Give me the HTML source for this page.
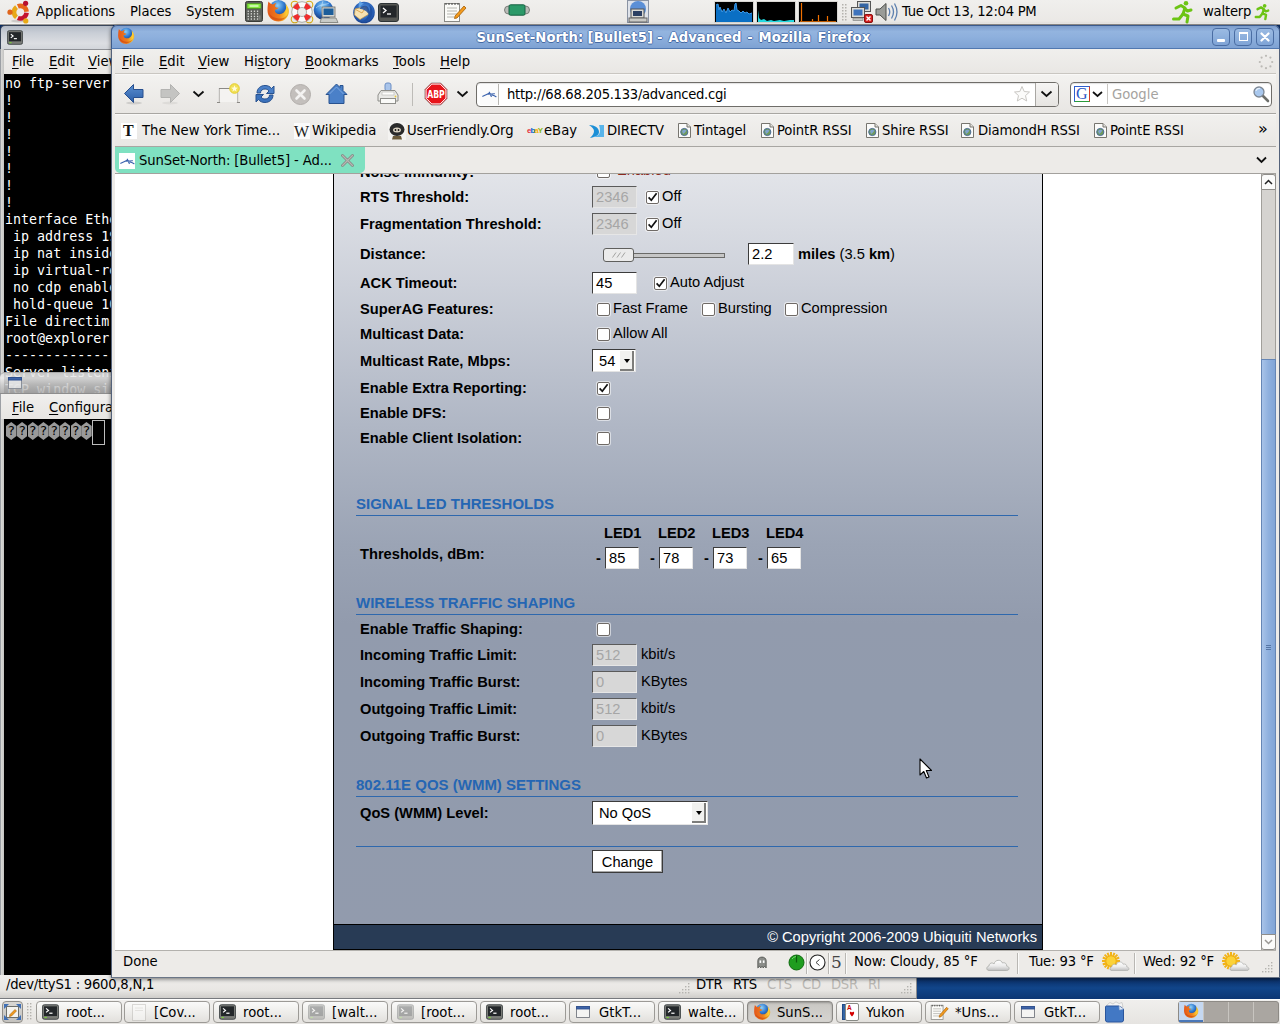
<!DOCTYPE html>
<html lang="en">
<head>
<meta charset="utf-8">
<title>SunSet-North: [Bullet5] - Advanced - Mozilla Firefox</title>
<style>
*{box-sizing:border-box;margin:0;padding:0}
html,body{width:1280px;height:1024px;overflow:hidden;background:linear-gradient(#0a2c63 0,#0a2c63 978px,#11458a 988px,#0c3674 999px)}
body{position:relative;font-family:"DejaVu Sans","Liberation Sans",sans-serif;font-size:13.33px;color:#000}
.abs{position:absolute}
.ui{font-family:"DejaVu Sans","Liberation Sans",sans-serif;font-size:13.2px;white-space:pre;line-height:16px}
.mono{font-family:"DejaVu Sans Mono","Liberation Mono",monospace;font-size:13.33px;white-space:pre;line-height:17px;color:#fff}
u{text-decoration:underline;text-underline-offset:2px}
/* ---------- panels ---------- */
#toppanel{left:0;top:0;width:1280px;height:25px;background:linear-gradient(#f0efed,#eae8e5);border-bottom:1px solid #9d9b98;box-shadow:inset 0 -1px 0 #f6f5f4}
#botpanel{left:0;top:999px;width:1280px;height:25px;background:linear-gradient(#f0efed,#e6e4e1);border-top:1px solid #fff}
/* ---------- terminal 1 ---------- */
#term1{left:0;top:25px;width:113px;height:352px}
#term1 .title{left:0;top:0;width:113px;height:24px;background:linear-gradient(#b4bbc6 0,#c9ced6 30%,#dcdee2 75%,#d3d6db 100%);border-top:1px solid #39455a;border-left:1px solid #39455a;border-radius:5px 0 0 0}
#term1 .menu{left:1px;top:24px;width:112px;height:25px;background:linear-gradient(#f0efed,#e9e7e4);border-top:1px solid #8f9196}
#term1 .blk{left:4px;top:49px;width:108px;height:330px;background:#000}
.lframe{left:0;width:4px;background:linear-gradient(90deg,#5f6672 0,#d9d9d7 1px,#c4c4c2 100%)}
/* ---------- gtkterm ---------- */
#term2{left:0;top:372px;width:917px;height:627px}
#term2 .title{left:0;top:0;width:113px;height:22px;background:linear-gradient(rgba(222,222,222,.9) 0,rgba(238,238,238,.88) 25%,rgba(205,205,205,.88) 60%,rgba(176,176,176,.9) 100%);border-top:1px solid #a9a9a9;border-bottom:1px solid #8d8d8d;border-radius:5px 0 0 0}
#term2 .menu{left:1px;top:22px;width:112px;height:25px;background:linear-gradient(#f0efed,#e7e5e2)}
#term2 .blk{left:4px;top:47px;width:108px;height:556px;background:#000}
#term2 .status{left:0;top:603px;width:917px;height:24px;background:linear-gradient(#efeeec 0,#e9e7e4 65%,#cfcdca 100%);border-bottom:1px solid #77797e;border-right:1px solid #8a8c90}
.tl{left:5px}
.qm{width:10.5px;height:18px;background:#9a9a9a;clip-path:polygon(50% 0,100% 22%,100% 78%,50% 100%,0 78%,0 22%);color:#000;font-family:"DejaVu Sans Mono",monospace;font-size:13px;line-height:18px;text-align:center}
.tb{top:1001px;width:86px;height:22px;margin-left:-.5px;border:1px solid #9c9a96;border-radius:4px;background:linear-gradient(#fafaf9,#ecebe8 60%,#e2e0dc)}
.tb.act{background:linear-gradient(#c9c7c3,#d6d4d0);border-color:#8a8884;box-shadow:inset 0 1px 2px rgba(0,0,0,.25)}
.tbt{top:1005px}
/* ---------- firefox ---------- */
#ff{left:0;top:0;width:1280px;height:1024px}
#ff .frame{left:111px;top:25px;width:1169px;height:953px;box-shadow:0 1px 4px rgba(0,0,0,.55);background:#edebe8;border-left:1px solid #54627a;border-right:1px solid #54627a;border-bottom:1px solid #6b7687;border-radius:6px 6px 0 0}
#ff .title{left:111px;top:25px;width:1169px;height:24px;background:linear-gradient(#7c9ccb 0,#93b4df 25%,#8eb0dd 50%,#7ea2d3 100%);border:1px solid #3b5a8c;border-bottom-color:#5178b0;border-radius:6px 6px 0 0}
#ff .ttext{top:30px;font-weight:bold;color:#fff;text-shadow:0 1px 0 #456aa3,0 -1px 0 #5f83bb,1px 0 0 #5478b0,-1px 0 0 #5478b0;letter-spacing:.05px}
.wbtn{top:28px;width:18px;height:18px;border:1px solid #4a6da3;border-radius:4px;background:linear-gradient(#9bbbe3,#7fa4d6)}
#ff .menubar{left:115px;top:49px;width:1161px;height:25px;background:linear-gradient(#f0efed,#e9e7e4);border-bottom:1px solid #c9c6c1}
#ff .navbar{left:115px;top:74px;width:1161px;height:40px;background:linear-gradient(#f3f2f0,#e8e6e3);border-top:1px solid #f9f8f7;border-bottom:1px solid #a8a6a2}
#ff .bmbar{left:115px;top:114px;width:1161px;height:33px;background:linear-gradient(#f1f0ee,#e9e7e4);border-top:1px solid #f9f8f7;border-bottom:1px solid #a8a6a2}
#ff .tabbar{left:115px;top:147px;width:1161px;height:27px;background:#edebe8;border-bottom:1px solid #a3a19d}
#ff .tab{left:115px;top:147px;width:250px;height:26px;background:#7fe1c1;border-radius:0 0 5px 5px}
#ff .content{left:115px;top:174px;width:1146px;height:776px;background:#fff}
#ff .statusbar{left:115px;top:950px;width:1161px;height:27px;background:#edebe8;border-top:1px solid #b3b1ad}
.m{top:54px}
.bm{top:123px}
.fav{width:16px;height:16px}
.entry{background:#fff;border:1px solid #6f6d69;border-radius:4px;box-shadow:inset 0 1px 1px rgba(0,0,0,.12)}
/*PAGECSS*/
/* ---------- web page ---------- */
#page{left:333px;top:174px;width:710px;height:776px;border-left:1px solid #000;border-right:1px solid #000;background:linear-gradient(#e2e4e9 0,#cdd1da 110px,#b0b7c5 250px,#9ba4b5 370px,#929bad 450px,#919bad 520px,#929bad 100%);overflow:hidden}
#page,.pg{font-family:"Liberation Sans",sans-serif;font-size:14.67px;line-height:17px;white-space:pre;color:#000}
.lb{left:26px;font-weight:bold}
.hd{left:22px;font-weight:bold;color:#2566b3;font-size:15px}
.hr{left:22px;width:662px;height:1px;background:#2e68ad}
.inp{height:22px;background:#fff;border:1px solid;border-color:#3c3c3c #e4e4e4 #e4e4e4 #3c3c3c;padding:2px 0 0 3px;font-size:14.67px;line-height:17px}
.inp.dis{background:#d7d7d7;color:#a6a6a6;border-color:#5a5a5a #e6e6e6 #e6e6e6 #5a5a5a}
.cb{width:12.500px;height:12.500px;background:#fff;border:1px solid #6f6a66;border-radius:2px;box-shadow:0 0 0 1px rgba(255,255,255,.55)}
.ddb{width:14px;height:20px;background:#f1f1ef;border:solid;border-width:0 2px 2px 0;border-color:#7d7d7b}
.ddb::after{content:"";position:absolute;left:4px;top:8px;border:3px solid transparent;border-top:4px solid #000;border-bottom:0}
#footer{left:0;top:750px;width:708px;height:26px;background:#283b55;border-top:1px solid #000;border-bottom:1px solid #000;color:#fff;font-size:14.67px;line-height:25px;text-align:right;padding-right:5px}
.btn{background:#fff;border:1px solid #3a3a3a;box-shadow:inset -1px -1px 0 #a9a9a9;font-size:14.67px;line-height:22px;text-align:center}
/*ENDPAGECSS*/
</style>
</head>
<body>
<svg width="0" height="0" style="position:absolute"><defs>
<radialGradient id="gGlobe" cx=".45" cy=".3" r=".75"><stop offset="0" stop-color="#8fd0f6"/><stop offset=".5" stop-color="#2f78cf"/><stop offset="1" stop-color="#112c6e"/></radialGradient>
<linearGradient id="gFox" x1="0" y1="0" x2="1" y2="0"><stop offset="0" stop-color="#e4581a"/><stop offset=".55" stop-color="#ef7f1c"/><stop offset=".9" stop-color="#fbcf35"/><stop offset="1" stop-color="#f8b22a"/></linearGradient>
<radialGradient id="gBird" cx=".5" cy=".4" r=".7"><stop offset="0" stop-color="#5e9fe6"/><stop offset=".6" stop-color="#2a62b8"/><stop offset="1" stop-color="#12337a"/></radialGradient>
<symbol id="ffx" viewBox="0 0 24 24"><circle cx="12.500" cy="9.800" r="8.800" fill="url(#gGlobe)"/><path d="M2.500 2.500 C3.500 4 5 5 7 5.500 C8 4.500 9.500 4 10.500 4.200 C9.300 5.200 8.800 6.500 9.200 7.800 C10.200 8.800 11.500 8.800 12.500 8.600 C12 10 10.500 10.600 9 10.800 C8.500 12.500 9.500 14.500 12 15 C15.500 15.700 19 13.500 20 9.500 C20.300 8 20 6.500 19.300 5 C22 7 23.500 10.500 22.800 14 C21.800 19 17.500 22.500 12.500 22.500 C6.500 22.500 1.500 18 1.500 11.500 C1.500 8 1.800 5 2.500 2.500Z" fill="url(#gFox)"/><path d="M3 14 C4 19 8 21.500 12.500 21.500 C17 21.500 20.500 19 22 15 C20 18.500 16.500 20 12.500 19.500 C8 19 4.500 17 3 14Z" fill="#c9420f" opacity=".55"/></symbol>
<linearGradient id="gCloud" x1="0" y1="0" x2="0" y2="1"><stop offset="0" stop-color="#ffffff"/><stop offset=".55" stop-color="#ececec"/><stop offset="1" stop-color="#bdbdbd"/></linearGradient>
</defs></svg>
<div id="toppanel" class="abs">
  <!-- ubuntu logo -->
  <svg class="abs" style="left:0;top:0" width="40" height="25" viewBox="0 0 40 25"><ellipse cx="18" cy="21" rx="7" ry="1.500" fill="#000" opacity=".13"/><path d="M16.51 17.23 A6.3 6.3 0 0 1 16.51 7.17" fill="none" stroke="#e8a818" stroke-width="4.600"/><path d="M17.84 6.40 A6.3 6.3 0 0 1 26.58 11.76" fill="none" stroke="#e8661a" stroke-width="4.600"/><path d="M26.57 12.86 A6.3 6.3 0 0 1 17.84 18.00" fill="none" stroke="#c4142e" stroke-width="4.600"/><circle cx="10.00" cy="12.20" r="2.600" fill="#e0641a"/><circle cx="25.60" cy="3.37" r="2.600" fill="#b8102f"/><circle cx="25.76" cy="20.93" r="2.600" fill="#e9a915"/></svg>
  <span class="ui abs" style="left:36px;top:4px;letter-spacing:-.12px">Applications</span>
  <span class="ui abs" style="left:130px;top:4px;letter-spacing:-.1px">Places</span>
  <span class="ui abs" style="left:186px;top:4px;letter-spacing:-.1px">System</span>
  <!-- calculator -->
  <svg class="abs" style="left:245px;top:1px" width="18" height="21" viewBox="0 0 18 21"><rect x="0.500" y="0.500" width="17" height="20" rx="1.800" fill="#5c5e5a" stroke="#3a3c38"/><rect x="2" y="2.500" width="14" height="5" rx=".6" fill="#83e83e" stroke="#4b8f22" stroke-width=".8"/><rect x="4.500" y="3.800" width="9" height="2.200" fill="#c9f7a8"/><g fill="#dfe0dc"><rect x="2.6" y="9.6" width="1.300" height="1.300"/><rect x="5.7" y="9.6" width="1.300" height="1.300"/><rect x="8.8" y="9.6" width="1.300" height="1.300"/><rect x="11.9" y="9.6" width="1.300" height="1.300"/><rect x="2.6" y="12.2" width="1.300" height="1.300"/><rect x="5.7" y="12.2" width="1.300" height="1.300"/><rect x="8.8" y="12.2" width="1.300" height="1.300"/><rect x="11.9" y="12.2" width="1.300" height="1.300"/><rect x="2.6" y="14.8" width="1.300" height="1.300"/><rect x="5.7" y="14.8" width="1.300" height="1.300"/><rect x="8.8" y="14.8" width="1.300" height="1.300"/><rect x="11.9" y="14.8" width="1.300" height="1.300"/><rect x="2.6" y="17.4" width="1.300" height="1.300"/><rect x="5.7" y="17.4" width="1.300" height="1.300"/><rect x="8.8" y="17.4" width="1.300" height="1.300"/><rect x="11.9" y="17.4" width="1.300" height="1.300"/></g><rect x="13.600" y="14.500" width="2" height="4.200" fill="#7c7e7a"/></svg>
  <!-- firefox -->
  <svg class="abs" style="left:266px;top:-1px" width="24" height="24"><use href="#ffx"/></svg>
  <!-- lifesaver -->
  <svg class="abs" style="left:290px;top:0px" width="24" height="24" viewBox="0 0 24 24"><g fill="none" stroke="#d8ac16" stroke-width="1.100"><circle cx="4.800" cy="4.800" r="3.600"/><circle cx="19.200" cy="4.800" r="3.600"/><circle cx="4.800" cy="19.200" r="3.600"/><circle cx="19.200" cy="19.200" r="3.600"/></g><circle cx="12" cy="12" r="7.400" fill="none" stroke="#fafafa" stroke-width="5.600"/><g stroke="#ef2d2d" stroke-width="5.600" fill="none"><path d="M18.76 15.01 A7.400 7.400 0 0 1 15.01 18.76"/><path d="M8.99 18.76 A7.400 7.400 0 0 1 5.24 15.01"/><path d="M5.24 8.99 A7.400 7.400 0 0 1 8.99 5.24"/><path d="M15.01 5.24 A7.400 7.400 0 0 1 18.76 8.99"/></g><circle cx="12" cy="12" r="10.300" fill="none" stroke="#9b9d99" stroke-width=".8"/><circle cx="12" cy="12" r="4.500" fill="none" stroke="#9b9d99" stroke-width=".8"/></svg>
  <!-- globe + computer -->
  <svg class="abs" style="left:313px;top:0px" width="26" height="24" viewBox="0 0 26 24"><circle cx="10.500" cy="10" r="9.800" fill="url(#gGlobe)"/><path d="M3 8 C7 4 13 5 16 3 M10 1 C8 6 8 14 11 19" fill="none" stroke="#cfe6fb" stroke-width=".8" opacity=".7"/><rect x="9" y="7" width="13" height="10" fill="#d4d6d2" stroke="#6b6d69" stroke-width=".8"/><rect x="10.500" y="8.500" width="10" height="6.500" fill="#1d5e9a"/><path d="M8.500 18 H23 L25 22.500 H7Z" fill="#c9cbc7" stroke="#7b7d79" stroke-width=".8"/></svg>
  <!-- thunderbird -->
  <svg class="abs" style="left:352px;top:0px" width="24" height="24" viewBox="0 0 24 24"><circle cx="12" cy="12.500" r="10.800" fill="url(#gBird)"/><path d="M8 1 C9 2.500 10.500 3.200 12 3.500 C9.500 4.500 8 6.500 7.500 9 C6 6.500 6.500 3 8 1Z" fill="#5fa3e8"/><path d="M3 9 L14 6.500 L17 14 L8 19.500 L2.500 15Z" fill="#f6e2b2" stroke="#c99a45" stroke-width=".7"/><path d="M3.200 9.300 L10 13 L14 6.800" fill="none" stroke="#d9a24a" stroke-width=".9"/><path d="M7.500 9 C9 6 12 5 14.500 6 C16.500 7 17.500 9.500 17 12 C18.500 10 18.500 7 17 5 C20 7 21.500 11 20 15 C18.500 19 15 21 11 21 C14 19.500 16 17 16.500 14 C15 11 11 9 7.500 9Z" fill="#1f4f9f" opacity=".85"/></svg>
  <!-- terminal launcher -->
  <svg class="abs" style="left:378px;top:3px" width="21" height="19" viewBox="0 0 21 19">
    <rect x="0.5" y="0.5" width="20" height="18" rx="2.5" fill="#555753" stroke="#2e3436"/><rect x="2.5" y="2.5" width="16" height="12" fill="#23272a"/>
    <path d="M5 5 L8 7.5 L5 10" stroke="#fff" stroke-width="1.3" fill="none"/><path d="M9 11 H13" stroke="#fff" stroke-width="1.3"/>
  </svg>
  <!-- notepad -->
  <svg class="abs" style="left:443px;top:1px" width="24" height="22" viewBox="0 0 24 22">
    <rect x="1.5" y="2.5" width="15" height="18" fill="#fbfbf8" stroke="#8a8a86"/>
    <g stroke="#b5b5b0"><path d="M4 7H14M4 10H14M4 13H14M4 16H11"/></g><path d="M3 2v2M6 2v2M9 2v2M12 2v2M15 2v2" stroke="#444"/>
    <path d="M12 15 L21 5 L23 7 L14 17 L11.5 17.5Z" fill="#f39a1d" stroke="#a15e08" stroke-width=".8"/>
  </svg>
  <!-- serial port -->
  <svg class="abs" style="left:504px;top:4px" width="26" height="12" viewBox="0 0 26 12">
    <rect x="0.5" y="2" width="25" height="8" rx="4" fill="#b9bbb7" stroke="#7c7e7a"/><rect x="5" y="0.8" width="16" height="10.4" rx="1.5" fill="#2b9968" stroke="#176142"/>
  </svg>
  <!-- computer -->
  <svg class="abs" style="left:627px;top:0px" width="22" height="24" viewBox="0 0 22 24">
    <rect x="0.5" y="0.5" width="21" height="22" fill="#dfe3ea" stroke="#8a93a3"/>
    <circle cx="11" cy="9" r="8" fill="#5b8fd6"/><rect x="4" y="9" width="13" height="9" fill="#d9d9d6" stroke="#555"/><rect x="6" y="11" width="9" height="5" fill="#2b3f63"/><rect x="2" y="18" width="18" height="4" fill="#c9c9c5" stroke="#666"/>
  </svg>
  <!-- system monitor graphs -->
  <svg class="abs" style="left:714px;top:1px" width="124" height="22" viewBox="0 0 124 22">
    <rect x="0.5" y="0.5" width="39" height="21" fill="#000" stroke="#d9d7d3"/>
    <path d="M2 21 V4 L4 3 L5 9 L6 6 L8 11 L10 8 L12 12 L14 7 L16 11 L18 9 L20 10 L21 3 L22 2 L23 9 L25 10 L27 12 L29 10 L31 12 L33 11 L35 13 L38 12 V21Z" fill="#0a6fc4"/>
    <path d="M2 4 L4 3 L5 9 L6 6 L8 11 L10 8 L12 12 L14 7 L16 11 L18 9 L20 10 L21 3 L22 2 L23 9 L25 10 L27 12 L29 10 L31 12 L33 11 L35 13 L38 12" fill="none" stroke="#3b97e6" stroke-width="1"/>
    <rect x="42.5" y="0.5" width="39" height="21" fill="#000" stroke="#d9d7d3"/>
    <path d="M44 21 V9 L45 17 L47 19 L50 18 L53 20 L57 19 L60 20 L66 19 L70 20 L76 19 L80 19 V21Z" fill="#23d9e0"/>
    <rect x="84.500" y="0.5" width="39" height="21" fill="#000" stroke="#d9d7d3"/>
    <path d="M87.500 2V21M98.500 18V21M104.500 14V21M113.500 15V21" stroke="#f07000" stroke-width="1.2"/><path d="M86 20.500H122" stroke="#c05a00"/>
  </svg>
  <svg class="abs" style="left:842px;top:4px" width="6" height="18" viewBox="0 0 6 18"><g fill="#b4b2ad"><rect x="0" y="0" width="1.500" height="1.500"/><rect x="3" y="0" width="1.500" height="1.500"/><rect x="0" y="3" width="1.500" height="1.500"/><rect x="3" y="3" width="1.500" height="1.500"/><rect x="0" y="6" width="1.500" height="1.500"/><rect x="3" y="6" width="1.500" height="1.500"/><rect x="0" y="9" width="1.500" height="1.500"/><rect x="3" y="9" width="1.500" height="1.500"/><rect x="0" y="12" width="1.500" height="1.500"/><rect x="3" y="12" width="1.500" height="1.500"/><rect x="0" y="15" width="1.500" height="1.500"/><rect x="3" y="15" width="1.500" height="1.500"/></g></svg>
  <!-- network -->
  <svg class="abs" style="left:850px;top:1px" width="24" height="22" viewBox="0 0 24 22">
    <rect x="7.500" y="0.5" width="13" height="10" fill="#dcdcd8" stroke="#555"/><rect x="9.500" y="2.500" width="9" height="6" fill="#3465a4"/>
    <rect x="1.500" y="6.500" width="13" height="10" fill="#dcdcd8" stroke="#555"/><rect x="3.500" y="8.500" width="9" height="6" fill="#3f74bd"/>
    <rect x="3" y="17" width="10" height="2.500" fill="#c4c4c0" stroke="#777" stroke-width=".6"/>
    <rect x="14.500" y="13.500" width="8" height="8" rx="1.500" fill="#d8201f" stroke="#8a0f0f"/><path d="M16.500 15.500l4 4M20.500 15.500l-4 4" stroke="#fff" stroke-width="1.400"/>
  </svg>
  <!-- volume -->
  <svg class="abs" style="left:875px;top:2px" width="24" height="20" viewBox="0 0 24 20">
    <path d="M1 7 H5 L11 1.500 V18.500 L5 13 H1Z" fill="#9a9c98" stroke="#4c4e4a"/>
    <path d="M13.500 6 Q16 10 13.500 14 M16.500 3.500 Q20.500 10 16.500 16.500 M19.500 1.500 Q24.500 10 19.500 18.500" fill="none" stroke="#5c7fae" stroke-width="1.300"/>
  </svg>
  <span class="ui abs" style="left:902px;top:4px;letter-spacing:-.3px">Tue Oct 13, 12:04 PM</span>
  <!-- running man big -->
  <svg class="abs" style="left:1171px;top:0px" width="24" height="24" viewBox="0 0 24 24">
    <g fill="none" stroke="#6cc414" stroke-width="3" stroke-linecap="round" stroke-linejoin="round"><path d="M5 8 L10 5.500 L14 8 L12 14 L17 16 L16 22"/><path d="M12 14 L8 19 L2.500 19"/><path d="M13.500 8.500 L16.500 11 L20 10"/></g>
    <circle cx="15" cy="3.300" r="2.300" fill="#6cc414"/>
  </svg>
  <span class="ui abs" style="left:1203px;top:4px;letter-spacing:-.2px">walterp</span>
  <svg class="abs" style="left:1254px;top:3px" width="17" height="18" viewBox="0 0 24 24">
    <g fill="none" stroke="#6cc414" stroke-width="3.400" stroke-linecap="round" stroke-linejoin="round"><path d="M5 8 L10 5.500 L14 8 L12 14 L17 16 L16 22"/><path d="M12 14 L8 19 L2.500 19"/><path d="M13.500 8.500 L16.500 11 L20 10"/></g>
    <circle cx="15" cy="3.300" r="2.600" fill="#6cc414"/>
  </svg>
</div>

<div id="term1" class="abs">
  <div class="title abs"></div>
  <div class="menu abs"></div>
  <div class="blk abs"></div>
  <div class="lframe abs" style="top:24px;height:355px"></div>
  <svg class="abs" style="left:7px;top:5px" width="16" height="15" viewBox="0 0 21 19"><rect x="0.500" y="0.500" width="20" height="18" rx="2.500" fill="#7a7c78" stroke="#2e3436"/><rect x="2.500" y="2.500" width="16" height="12" fill="#23272a"/><path d="M5 5 L8 7.500 L5 10" stroke="#fff" stroke-width="1.500" fill="none"/><path d="M9 11 H13" stroke="#fff" stroke-width="1.500"/><rect x="3" y="15.500" width="3" height="1.500" fill="#7bd03a"/></svg>
  <span class="ui abs" style="left:12px;top:29px"><u>F</u>ile</span><span class="ui abs" style="left:49px;top:29px"><u>E</u>dit</span><span class="ui abs" style="left:88px;top:29px;width:24px;overflow:hidden"><u>V</u>iew</span>
  <span class="mono tl abs" style="top:50px;width:107px;overflow:hidden">no ftp-server</span>
  <span class="mono tl abs" style="top:67px;width:107px;overflow:hidden">!</span>
  <span class="mono tl abs" style="top:84px;width:107px;overflow:hidden">!</span>
  <span class="mono tl abs" style="top:101px;width:107px;overflow:hidden">!</span>
  <span class="mono tl abs" style="top:118px;width:107px;overflow:hidden">!</span>
  <span class="mono tl abs" style="top:135px;width:107px;overflow:hidden">!</span>
  <span class="mono tl abs" style="top:152px;width:107px;overflow:hidden">!</span>
  <span class="mono tl abs" style="top:169px;width:107px;overflow:hidden">!</span>
  <span class="mono tl abs" style="top:186px;width:107px;overflow:hidden">interface Ethe</span>
  <span class="mono tl abs" style="top:203px;width:107px;overflow:hidden"> ip address 19</span>
  <span class="mono tl abs" style="top:220px;width:107px;overflow:hidden"> ip nat inside</span>
  <span class="mono tl abs" style="top:237px;width:107px;overflow:hidden"> ip virtual-re</span>
  <span class="mono tl abs" style="top:254px;width:107px;overflow:hidden"> no cdp enable</span>
  <span class="mono tl abs" style="top:271px;width:107px;overflow:hidden"> hold-queue 10</span>
  <span class="mono tl abs" style="top:288px;width:107px;overflow:hidden">File directim</span>
  <span class="mono tl abs" style="top:305px;width:107px;overflow:hidden">root@explorer</span>
  <span class="mono tl abs" style="top:322px;width:107px;overflow:hidden">-------------</span>
  <span class="mono tl abs" style="top:339px;width:107px;overflow:hidden">Server listeni</span>
  <span class="mono tl abs" style="top:356px;width:107px;overflow:hidden">TCP window siz</span>
</div>

<div id="term2" class="abs">
  <div class="blk abs"></div>
  <div class="lframe abs" style="top:22px;height:603px"></div>
  <div class="title abs"></div>
  <svg class="abs" style="left:8px;top:5px" width="14" height="12" viewBox="0 0 14 12"><rect x="0.500" y="0.500" width="13" height="11" fill="rgba(235,236,238,.75)" stroke="#8b9099"/><rect x="0.500" y="0.500" width="13" height="2.500" fill="#3e64a8" stroke="#2d4f8e"/></svg>
  <div class="menu abs"></div>
  <span class="ui abs" style="left:12px;top:28px"><u>F</u>ile</span><span class="ui abs" style="left:49px;top:28px;width:63px;overflow:hidden"><u>C</u>onfiguration</span>
  <div class="qm abs" style="left:6.0px;top:50px">?</div><div class="qm abs" style="left:16.8px;top:50px">?</div><div class="qm abs" style="left:27.5px;top:50px">?</div><div class="qm abs" style="left:38.2px;top:50px">?</div><div class="qm abs" style="left:49.0px;top:50px">?</div><div class="qm abs" style="left:59.8px;top:50px">?</div><div class="qm abs" style="left:70.5px;top:50px">?</div><div class="qm abs" style="left:81.2px;top:50px">?</div>
  <div class="abs" style="left:92px;top:48px;width:13px;height:25px;border:1px solid #bdbdbd"></div>
  <div class="status abs"></div>
  <span class="ui abs" style="left:6px;top:605px;letter-spacing:-.24px">/dev/ttyS1 : 9600,8,N,1</span>
  <span class="ui abs" style="left:696px;top:605px;letter-spacing:-.3px">DTR</span><span class="ui abs" style="left:733px;top:605px;letter-spacing:-.3px">RTS</span>
  <span class="ui abs" style="left:767px;top:605px;color:#b9b7b3;letter-spacing:-.3px">CTS</span><span class="ui abs" style="left:802px;top:605px;color:#b9b7b3;letter-spacing:-.3px">CD</span><span class="ui abs" style="left:831px;top:605px;color:#b9b7b3;letter-spacing:-.3px">DSR</span><span class="ui abs" style="left:868px;top:605px;color:#b9b7b3;letter-spacing:-.3px">RI</span>
  <svg class="abs" style="left:679px;top:611px" width="11" height="11" viewBox="0 0 11 11"><g fill="#b5b3af"><rect x="9" y="0" width="1.400" height="1.400"/><rect x="6" y="3" width="1.400" height="1.400"/><rect x="9" y="3" width="1.400" height="1.400"/><rect x="3" y="6" width="1.400" height="1.400"/><rect x="6" y="6" width="1.400" height="1.400"/><rect x="9" y="6" width="1.400" height="1.400"/><rect x="0" y="9" width="1.400" height="1.400"/><rect x="3" y="9" width="1.400" height="1.400"/><rect x="6" y="9" width="1.400" height="1.400"/><rect x="9" y="9" width="1.400" height="1.400"/></g></svg> <svg class="abs" style="left:901px;top:611px" width="11" height="11" viewBox="0 0 11 11"><g fill="#b5b3af"><rect x="9" y="0" width="1.400" height="1.400"/><rect x="6" y="3" width="1.400" height="1.400"/><rect x="9" y="3" width="1.400" height="1.400"/><rect x="3" y="6" width="1.400" height="1.400"/><rect x="6" y="6" width="1.400" height="1.400"/><rect x="9" y="6" width="1.400" height="1.400"/><rect x="0" y="9" width="1.400" height="1.400"/><rect x="3" y="9" width="1.400" height="1.400"/><rect x="6" y="9" width="1.400" height="1.400"/><rect x="9" y="9" width="1.400" height="1.400"/></g></svg>
</div>

<div id="ff" class="abs">
  <div class="frame abs"></div>
  <div class="title abs"></div>
  <!-- firefox title icon -->
  <svg class="abs" style="left:117px;top:27px" width="18" height="18"><use href="#ffx"/></svg>
  <span class="ui ttext abs" style="left:476.5px">SunSet-North:</span><span class="ui ttext abs" style="left:587.6px">[Bullet5]</span><span class="ui ttext abs" style="left:657px">-</span><span class="ui ttext abs" style="left:668.4px">Advanced</span><span class="ui ttext abs" style="left:747.2px">-</span><span class="ui ttext abs" style="left:758.5px">Mozilla</span><span class="ui ttext abs" style="left:817.6px">Firefox</span>
  <div class="wbtn abs" style="left:1212px"><div class="abs" style="left:4px;top:10px;width:8px;height:3px;background:#fff;border-radius:1px"></div></div>
  <div class="wbtn abs" style="left:1234px"><div class="abs" style="left:4px;top:3px;width:9px;height:9px;border:1px solid #fff;border-top-width:2px"></div></div>
  <div class="wbtn abs" style="left:1256px"><svg class="abs" style="left:3px;top:3px" width="10" height="10" viewBox="0 0 10 10"><path d="M1.500 1.500L8.500 8.500M8.500 1.500L1.500 8.500" stroke="#fff" stroke-width="2.200" stroke-linecap="round"/></svg></div>

  <div class="menubar abs"></div>
  <span class="ui m abs" style="left:122px"><u>F</u>ile</span>
  <span class="ui m abs" style="left:159px"><u>E</u>dit</span>
  <span class="ui m abs" style="left:198px"><u>V</u>iew</span>
  <span class="ui m abs" style="left:244px">Hi<u>s</u>tory</span>
  <span class="ui m abs" style="left:305px"><u>B</u>ookmarks</span>
  <span class="ui m abs" style="left:393px"><u>T</u>ools</span>
  <span class="ui m abs" style="left:440px"><u>H</u>elp</span>
  <!-- throbber -->
  <svg class="abs" style="left:1258px;top:54px" width="16" height="16" viewBox="0 0 16 16"><g fill="#bbb9b5"><circle cx="8" cy="1.800" r="1.100"/><circle cx="12.400" cy="3.600" r="1.100"/><circle cx="14.200" cy="8" r="1.100"/><circle cx="12.400" cy="12.400" r="1.100"/><circle cx="8" cy="14.200" r="1.100"/><circle cx="3.600" cy="12.400" r="1.100"/><circle cx="1.800" cy="8" r="1.100"/><circle cx="3.600" cy="3.600" r="1.100"/></g></svg>

  <div class="navbar abs"></div>
  <!-- back -->
  <svg class="abs" style="left:123px;top:83px" width="22" height="22" viewBox="0 0 22 22"><defs><linearGradient id="gb" x1="0" y1="0" x2="0" y2="1"><stop offset="0" stop-color="#5b8fd0"/><stop offset="1" stop-color="#2c5ea8"/></linearGradient></defs><ellipse cx="11" cy="20" rx="8" ry="1.500" fill="#000" opacity=".12"/><path d="M1.500 10.500 L10.500 1.500 V6.500 H20 V14.500 H10.500 V19.500Z" fill="url(#gb)" stroke="#274f8e" stroke-linejoin="round"/></svg>
  <!-- forward (disabled) -->
  <svg class="abs" style="left:159px;top:83px" width="22" height="22" viewBox="0 0 22 22"><ellipse cx="11" cy="20" rx="8" ry="1.500" fill="#000" opacity=".06"/><path d="M20.500 10.500 L11.500 1.500 V6.500 H2 V14.500 H11.500 V19.500Z" fill="#c4c4c2" stroke="#b3b3b1" stroke-linejoin="round"/></svg>
  <svg class="abs" style="left:192px;top:90px" width="13" height="8" viewBox="0 0 13 8"><path d="M1.500 1.500L6.500 6L11.500 1.500" fill="none" stroke="#111" stroke-width="1.800"/></svg>
  <!-- new tab -->
  <svg class="abs" style="left:216px;top:83px" width="27" height="22" viewBox="0 0 27 22"><path d="M1 19.500 H3.500 V5.500 H21.500 V19.500 H24" fill="none" stroke="#8b8985" stroke-width="1.200"/><path d="M3.500 6 H21.500 V19 H3.500Z" fill="#f4f3f1"/><circle cx="18.500" cy="5.500" r="4.800" fill="#f2e157" stroke="#e3cd2f"/><path d="M18.500 2.300L19.400 4.600L21.800 4.700L19.900 6.200L20.600 8.500L18.500 7.200L16.400 8.500L17.100 6.200L15.200 4.700L17.600 4.600Z" fill="#fffbe0"/></svg>
  <!-- reload -->
  <svg class="abs" style="left:254px;top:83px" width="22" height="22" viewBox="0 0 22 22"><path d="M3 10 C3 5 7 2.500 11 2.500 C14 2.500 16 3.500 17.500 5.500 L20 3 V10.500 H12.500 L15 8 C14 6.500 12.500 6 11 6 C8.500 6 6.500 7.500 6.500 10Z" fill="#4a80c8" stroke="#28528f" stroke-linejoin="round"/><path d="M19 12 C19 17 15 19.500 11 19.500 C8 19.500 6 18.500 4.500 16.500 L2 19 V11.500 H9.500 L7 14 C8 15.500 9.500 16 11 16 C13.500 16 15.500 14.500 15.500 12Z" fill="#3b72bc" stroke="#28528f" stroke-linejoin="round"/></svg>
  <!-- stop (disabled) -->
  <svg class="abs" style="left:289px;top:83px" width="23" height="23" viewBox="0 0 23 23"><circle cx="11.500" cy="11.500" r="10" fill="#c3bfbc" stroke="#b2aeab"/><path d="M7.500 7.500L15.500 15.500M15.500 7.500L7.500 15.500" stroke="#f3f2f1" stroke-width="2.600" stroke-linecap="round"/></svg>
  <!-- home -->
  <svg class="abs" style="left:325px;top:83px" width="23" height="22" viewBox="0 0 23 22"><path d="M1 11.500 L11.500 1 L15 4.500 V2.500 H18 V7.500 L22 11.500 H19 V20.500 H4 V11.500Z" fill="#4a80c8" stroke="#28528f" stroke-linejoin="round"/><path d="M4.500 11 L11.500 4 L18.500 11" fill="none" stroke="#7faae2" stroke-width="1"/></svg>
  <!-- print -->
  <svg class="abs" style="left:376px;top:82px" width="24" height="24" viewBox="0 0 24 24"><rect x="9" y="1" width="6" height="8" rx="2" fill="#a9c4ea" stroke="#6d8fc4"/><path d="M5 8.500 H19 L22 13 V19 H2 V13Z" fill="#e9e9e6" stroke="#8e8e8a"/><rect x="4.500" y="16.500" width="15" height="5" fill="#fafaf8" stroke="#8e8e8a"/><rect x="6" y="10" width="12" height="3" fill="#fdfdfb" stroke="#b5b5b1" stroke-width=".6"/><circle cx="19.500" cy="14.500" r=".9" fill="#e8c83b"/></svg>
  <div class="abs" style="left:412px;top:83px;width:1px;height:23px;background:#bdbbb7"></div>
  <!-- ABP -->
  <svg class="abs" style="left:424px;top:82px" width="24" height="24" viewBox="0 0 26 26"><path d="M8 1 H18 L25 8 V18 L18 25 H8 L1 18 V8Z" fill="#e8141b" stroke="#9b9b99" stroke-width="1"/><path d="M8.500 2.300 H17.500 L23.700 8.500 V17.500 L17.500 23.700 H8.500 L2.300 17.500 V8.500Z" fill="none" stroke="#fff" stroke-width="1"/><text x="13" y="17" text-anchor="middle" font-family="DejaVu Sans Condensed,DejaVu Sans,sans-serif" font-weight="bold" font-size="10.500" fill="#fff" textLength="19" lengthAdjust="spacingAndGlyphs">ABP</text></svg>
  <svg class="abs" style="left:456px;top:90px" width="13" height="8" viewBox="0 0 13 8"><path d="M1.500 1.500L6.500 6L11.500 1.500" fill="none" stroke="#111" stroke-width="1.800"/></svg>
  <!-- url bar -->
  <div class="entry abs" style="left:476px;top:82px;width:583px;height:25px"></div><div class="abs" style="left:1036px;top:83px;width:22px;height:23px;background:linear-gradient(#f6f5f4,#e6e4e1);border-radius:0 3px 3px 0"></div>
  <div class="abs" style="left:480px;top:84px;width:19px;height:21px;background:#fbfbfb;border-right:1px solid #b9b7b3"></div>
  <svg class="abs ubnt" style="left:481px;top:86px" width="16" height="16" viewBox="0 0 16 16"><path d="M1.800 10.300 C4 9.200 6 8.200 8.600 7 M8.300 6.200 L10.300 10.400 M7 8.200 L13.300 7.700 M11 9 C12.800 9.500 14 10 15 10.700" fill="none" stroke="#3b63ae" stroke-width="1.150" stroke-linecap="round"/></svg>
  <span class="ui abs" style="left:507px;top:87px;letter-spacing:-.3px">http://68.68.205.133/advanced.cgi</span>
  <svg class="abs" style="left:1013px;top:85px" width="18" height="18" viewBox="0 0 18 18"><path d="M9 1.500L11.200 6.500L16.500 7L12.500 10.600L13.700 16L9 13.200L4.300 16L5.500 10.600L1.500 7L6.800 6.500Z" fill="#fbfbfa" stroke="#c9c7c3" stroke-linejoin="round"/></svg>
  <div class="abs" style="left:1035px;top:83px;width:1px;height:23px;background:#a9a7a3"></div>
  <svg class="abs" style="left:1040px;top:90px" width="13" height="8" viewBox="0 0 13 8"><path d="M1.500 1.500L6.500 6L11.500 1.500" fill="none" stroke="#111" stroke-width="1.800"/></svg>
  <!-- search box -->
  <div class="entry abs" style="left:1070px;top:82px;width:202px;height:25px"></div>
  <div class="abs" style="left:1074px;top:86px;width:16px;height:16px;background:#fff;border:1px solid #2f5fcf;border-right-color:#d03c2a;border-bottom-color:#2a9a3a"></div>
  <span class="abs" style="left:1076px;top:85px;font-family:'Liberation Serif',serif;font-size:16px;line-height:18px;color:#2a56c6">G</span>
  <svg class="abs" style="left:1092px;top:91px" width="11" height="7" viewBox="0 0 11 7"><path d="M1 1L5.500 5L10 1" fill="none" stroke="#111" stroke-width="1.700"/></svg>
  <div class="abs" style="left:1107px;top:84px;width:1px;height:20px;background:#c9c7c3"></div>
  <span class="ui abs" style="left:1112px;top:87px;color:#a5a3a0">Google</span>
  <svg class="abs" style="left:1252px;top:85px" width="18" height="18" viewBox="0 0 18 18"><path d="M10.500 10.500L16 16" stroke="#6d6f6b" stroke-width="2.600" stroke-linecap="round"/><circle cx="7" cy="7" r="5" fill="#a9c8ee" stroke="#7d8794" stroke-width="1.300"/><path d="M4 6 A3.200 3.200 0 0 1 8 3.500" fill="none" stroke="#e6f0fb" stroke-width="1.200"/></svg>

  <div class="bmbar abs"></div>
  <!-- NYT -->
  <div class="abs fav" style="left:121px;top:123px;background:#fff"></div><span class="abs" style="left:123px;top:121px;font-family:'Liberation Serif',serif;font-weight:bold;font-size:16px;line-height:19px;color:#111">T</span>
  <span class="ui bm abs" style="left:142px">The New York Time...</span>
  <div class="abs fav" style="left:294px;top:123px;background:#fbfbfb"></div><span class="abs" style="left:294px;top:122px;font-family:'Liberation Serif',serif;font-size:16px;line-height:19px;color:#222;letter-spacing:-1px">W</span>
  <span class="ui bm abs" style="left:312px">Wikipedia</span>
  <svg class="abs" style="left:388px;top:122px" width="18" height="18" viewBox="0 0 18 18"><rect width="18" height="18" fill="#f4f3f1"/><ellipse cx="9" cy="7.500" rx="7.500" ry="6.500" fill="#2a2a2a"/><ellipse cx="9" cy="8" rx="4" ry="2.500" fill="#d8d0c0"/><circle cx="7.500" cy="8" r=".9" fill="#111"/><circle cx="10.500" cy="8" r=".9" fill="#111"/><path d="M5 14 L4 17.500 H14 L13 14Z" fill="#6b5a3a"/></svg>
  <span class="ui bm abs" style="left:407px;letter-spacing:-.12px">UserFriendly.Org</span>
  <span class="abs" style="left:527px;top:125px;font-family:'Liberation Sans',sans-serif;font-weight:bold;font-size:8px;line-height:12px;letter-spacing:-1px"><span style="color:#e53238">e</span><span style="color:#0064d2">b</span><span style="color:#f5af02">a</span><span style="color:#86b817">Y</span></span>
  <span class="ui bm abs" style="left:544px">eBay</span>
  <svg class="abs" style="left:588px;top:123px" width="17" height="16" viewBox="0 0 17 16"><path d="M1 2 C7 2 11 5 11 9 C11 12 8 14 2 15 C5 12 6 10 6 8 C6 6 4 4 1 2Z" fill="#1c8fd6"/><path d="M11 2 H16 V14 H5 C10 13 12 11 12 8 C12 5.500 11.500 3.500 11 2Z" fill="#58b4ea"/></svg>
  <span class="ui bm abs" style="left:607px;letter-spacing:-.12px">DIRECTV</span>
  <svg class="abs" style="left:677px;top:122px" width="15" height="17" viewBox="0 0 15 17"><path d="M1.500 1.500H10L13.500 5V15.500H1.500Z" fill="#fbfbfa" stroke="#77756f"/><path d="M10 1.500V5H13.500" fill="#e4e3df" stroke="#77756f"/><circle cx="7.300" cy="10" r="3.600" fill="#6f9a5b" stroke="#4d6d9a"/><path d="M5 9 Q7 7 9.500 8.500 Q8 11 6 12Z" fill="#7fa3cf"/></svg><span class="ui bm abs" style="left:694px;letter-spacing:-.12px">Tintagel</span>
  <svg class="abs" style="left:760px;top:122px" width="15" height="17" viewBox="0 0 15 17"><path d="M1.500 1.500H10L13.500 5V15.500H1.500Z" fill="#fbfbfa" stroke="#77756f"/><path d="M10 1.500V5H13.500" fill="#e4e3df" stroke="#77756f"/><circle cx="7.300" cy="10" r="3.600" fill="#6f9a5b" stroke="#4d6d9a"/><path d="M5 9 Q7 7 9.500 8.500 Q8 11 6 12Z" fill="#7fa3cf"/></svg><span class="ui bm abs" style="left:777px;letter-spacing:-.12px">PointR RSSI</span>
  <svg class="abs" style="left:865px;top:122px" width="15" height="17" viewBox="0 0 15 17"><path d="M1.500 1.500H10L13.500 5V15.500H1.500Z" fill="#fbfbfa" stroke="#77756f"/><path d="M10 1.500V5H13.500" fill="#e4e3df" stroke="#77756f"/><circle cx="7.300" cy="10" r="3.600" fill="#6f9a5b" stroke="#4d6d9a"/><path d="M5 9 Q7 7 9.500 8.500 Q8 11 6 12Z" fill="#7fa3cf"/></svg><span class="ui bm abs" style="left:882px;letter-spacing:-.12px">Shire RSSI</span>
  <svg class="abs" style="left:960px;top:122px" width="15" height="17" viewBox="0 0 15 17"><path d="M1.500 1.500H10L13.500 5V15.500H1.500Z" fill="#fbfbfa" stroke="#77756f"/><path d="M10 1.500V5H13.500" fill="#e4e3df" stroke="#77756f"/><circle cx="7.300" cy="10" r="3.600" fill="#6f9a5b" stroke="#4d6d9a"/><path d="M5 9 Q7 7 9.500 8.500 Q8 11 6 12Z" fill="#7fa3cf"/></svg><span class="ui bm abs" style="left:978px;letter-spacing:-.12px">DiamondH RSSI</span>
  <svg class="abs" style="left:1093px;top:122px" width="15" height="17" viewBox="0 0 15 17"><path d="M1.500 1.500H10L13.500 5V15.500H1.500Z" fill="#fbfbfa" stroke="#77756f"/><path d="M10 1.500V5H13.500" fill="#e4e3df" stroke="#77756f"/><circle cx="7.300" cy="10" r="3.600" fill="#6f9a5b" stroke="#4d6d9a"/><path d="M5 9 Q7 7 9.500 8.500 Q8 11 6 12Z" fill="#7fa3cf"/></svg><span class="ui bm abs" style="left:1110px;letter-spacing:-.12px">PointE RSSI</span>
  <span class="ui abs" style="left:1258px;top:121px;font-size:16px;letter-spacing:-1px">»</span>

  <div class="tabbar abs"></div>
  <div class="tab abs"></div>
  <div class="abs fav" style="left:119px;top:153px;background:#fff"></div>
  <svg class="abs" style="left:119px;top:153px" width="16" height="16" viewBox="0 0 16 16"><path d="M1.800 10.300 C4 9.200 6 8.200 8.600 7 M8.300 6.200 L10.300 10.400 M7 8.200 L13.300 7.700 M11 9 C12.800 9.500 14 10 15 10.700" fill="none" stroke="#3b63ae" stroke-width="1.150" stroke-linecap="round"/></svg>
  <span class="ui abs" style="left:139px;top:153px;letter-spacing:-.12px">SunSet-North: [Bullet5] - Ad...</span>
  <svg class="abs" style="left:341px;top:154px" width="13" height="13" viewBox="0 0 13 13"><path d="M1.500 1.500L11.500 11.500M11.500 1.500L1.500 11.500" stroke="#858783" stroke-width="2.800" stroke-linecap="round"/><path d="M1.500 1.500L11.500 11.500M11.500 1.500L1.500 11.500" stroke="#b5b7b3" stroke-width="1.200" stroke-linecap="round"/></svg>
  <svg class="abs" style="left:1256px;top:156px" width="11" height="8" viewBox="0 0 11 8"><path d="M1 1.500L5.500 6L10 1.500" fill="none" stroke="#111" stroke-width="1.800"/></svg>
  <div class="content abs"></div>
<!--PAGE-->
  <div id="page" class="abs">
    <span class="lb abs" style="top:-10px">Noise Immunity:</span>
    <div class="cb abs" style="left:263px;top:-9px"></div>
    <span class="abs" style="left:283px;top:-12px;color:#8c2a1e">Enabled</span>
    <span class="lb abs" style="top:15px">RTS Threshold:</span>
    <div class="inp abs dis" style="left:258px;top:12px;width:45px;height:22px;">2346</div>
    <div class="cb abs" style="left:312px;top:17px"><svg class="abs" style="left:0;top:0" width="11" height="11" viewBox="0 0 11 11"><path d="M1.600 5.400 L4.300 8.300 L9.600 1.200" fill="none" stroke="#111" stroke-width="1.700"/></svg></div>
    <span class="abs" style="left:328px;top:14px;">Off</span>
    <span class="lb abs" style="top:42px">Fragmentation Threshold:</span>
    <div class="inp abs dis" style="left:258px;top:39px;width:45px;height:22px;">2346</div>
    <div class="cb abs" style="left:312px;top:44px"><svg class="abs" style="left:0;top:0" width="11" height="11" viewBox="0 0 11 11"><path d="M1.600 5.400 L4.300 8.300 L9.600 1.200" fill="none" stroke="#111" stroke-width="1.700"/></svg></div>
    <span class="abs" style="left:328px;top:41px;">Off</span>
    <span class="lb abs" style="top:72px">Distance:</span>
    <div class="abs" style="left:296px;top:79px;width:95px;height:5px;background:#c6c6c6;border:1px solid #6a6a68"></div>
    <div class="abs" style="left:269px;top:74px;width:31px;height:14px;background:#ebebeb;border:1px solid #5f5f5d;border-radius:3px"><svg class="abs" style="left:8px;top:3px" width="14" height="6" viewBox="0 0 14 6"><path d="M0.500 5.500L4 0.500M5 5.500L8.500 0.500M9.500 5.500L13 0.500" stroke="#9b9b99" stroke-width=".9"/></svg></div>
    <div class="inp abs" style="left:414px;top:69px;width:46px;height:22px;">2.2</div>
    <span class="abs" style="left:464px;top:72px"><b>miles</b> (3.5 <b>km</b>)</span>
    <span class="lb abs" style="top:101px">ACK Timeout:</span>
    <div class="inp abs" style="left:258px;top:98px;width:45px;height:22px;">45</div>
    <div class="cb abs" style="left:320px;top:103px"><svg class="abs" style="left:0;top:0" width="11" height="11" viewBox="0 0 11 11"><path d="M1.600 5.400 L4.300 8.300 L9.600 1.200" fill="none" stroke="#111" stroke-width="1.700"/></svg></div>
    <span class="abs" style="left:336px;top:100px;">Auto Adjust</span>
    <span class="lb abs" style="top:127px">SuperAG Features:</span>
    <div class="cb abs" style="left:263px;top:129px"></div>
    <span class="abs" style="left:279px;top:126px;">Fast Frame</span>
    <div class="cb abs" style="left:368px;top:129px"></div>
    <span class="abs" style="left:384px;top:126px;">Bursting</span>
    <div class="cb abs" style="left:451px;top:129px"></div>
    <span class="abs" style="left:467px;top:126px;">Compression</span>
    <span class="lb abs" style="top:152px">Multicast Data:</span>
    <div class="cb abs" style="left:263px;top:154px"></div>
    <span class="abs" style="left:279px;top:151px;">Allow All</span>
    <span class="lb abs" style="top:179px">Multicast Rate, Mbps:</span>
    <div class="inp abs" style="left:258px;top:175px;width:44px;height:23px;padding-left:6px;padding-top:3px">54</div>
    <div class="ddb abs" style="left:286px;top:177px"></div>
    <span class="lb abs" style="top:206px">Enable Extra Reporting:</span>
    <div class="cb abs" style="left:263px;top:208px"><svg class="abs" style="left:0;top:0" width="11" height="11" viewBox="0 0 11 11"><path d="M1.600 5.400 L4.300 8.300 L9.600 1.200" fill="none" stroke="#111" stroke-width="1.700"/></svg></div>
    <span class="lb abs" style="top:231px">Enable DFS:</span>
    <div class="cb abs" style="left:263px;top:233px"></div>
    <span class="lb abs" style="top:256px">Enable Client Isolation:</span>
    <div class="cb abs" style="left:263px;top:258px"></div>
    <span class="hd abs" style="top:321px">SIGNAL LED THRESHOLDS</span>
    <div class="hr abs" style="top:341px"></div>
    <span class="abs" style="left:270px;top:351px;"><b>LED1</b></span>
    <span class="abs" style="left:262px;top:376px;"><b>-</b></span>
    <div class="inp abs" style="left:271px;top:373px;width:34px;height:22px;">85</div>
    <span class="abs" style="left:324px;top:351px;"><b>LED2</b></span>
    <span class="abs" style="left:316px;top:376px;"><b>-</b></span>
    <div class="inp abs" style="left:325px;top:373px;width:34px;height:22px;">78</div>
    <span class="abs" style="left:378px;top:351px;"><b>LED3</b></span>
    <span class="abs" style="left:370px;top:376px;"><b>-</b></span>
    <div class="inp abs" style="left:379px;top:373px;width:34px;height:22px;">73</div>
    <span class="abs" style="left:432px;top:351px;"><b>LED4</b></span>
    <span class="abs" style="left:424px;top:376px;"><b>-</b></span>
    <div class="inp abs" style="left:433px;top:373px;width:34px;height:22px;">65</div>
    <span class="lb abs" style="top:372px">Thresholds, dBm:</span>
    <span class="hd abs" style="top:420px">WIRELESS TRAFFIC SHAPING</span>
    <div class="hr abs" style="top:440px"></div>
    <span class="lb abs" style="top:447px">Enable Traffic Shaping:</span>
    <div class="cb abs" style="left:263px;top:449px"></div>
    <span class="lb abs" style="top:473px">Incoming Traffic Limit:</span>
    <div class="inp abs dis" style="left:258px;top:470px;width:45px;height:22px;">512</div>
    <span class="abs" style="left:307px;top:472px;">kbit/s</span>
    <span class="lb abs" style="top:500px">Incoming Traffic Burst:</span>
    <div class="inp abs dis" style="left:258px;top:497px;width:45px;height:22px;">0</div>
    <span class="abs" style="left:307px;top:499px;">KBytes</span>
    <span class="lb abs" style="top:527px">Outgoing Traffic Limit:</span>
    <div class="inp abs dis" style="left:258px;top:524px;width:45px;height:22px;">512</div>
    <span class="abs" style="left:307px;top:526px;">kbit/s</span>
    <span class="lb abs" style="top:554px">Outgoing Traffic Burst:</span>
    <div class="inp abs dis" style="left:258px;top:551px;width:45px;height:22px;">0</div>
    <span class="abs" style="left:307px;top:553px;">KBytes</span>
    <span class="hd abs" style="top:602px">802.11E QOS (WMM) SETTINGS</span>
    <div class="hr abs" style="top:622px"></div>
    <span class="lb abs" style="top:631px">QoS (WMM) Level:</span>
    <div class="inp abs" style="left:258px;top:627px;width:116px;height:24px;padding-left:6px;padding-top:3px">No QoS</div>
    <div class="ddb abs" style="left:358px;top:629px"></div>
    <div class="hr abs" style="top:672px"></div>
    <div class="btn abs" style="left:258px;top:676px;width:71px;height:23px">Change</div>
    <div id="footer" class="abs">© Copyright 2006-2009 Ubiquiti Networks</div>
  </div>
<!--/PAGE-->
  <div class="abs" style="left:1261px;top:174px;width:15px;height:776px;background:#d5d3d0;border-left:1px solid #a19f9b;border-right:1px solid #a19f9b"></div>
  <div class="abs" style="left:1261px;top:174px;width:15px;height:16px;background:#fbfbfa;border:1px solid #8f8d89;border-radius:3px 3px 0 0"><svg class="abs" style="left:2px;top:4px" width="9" height="6" viewBox="0 0 9 6"><path d="M1 5L4.500 1.500L8 5" fill="none" stroke="#222" stroke-width="1.500"/></svg></div>
  <div class="abs" style="left:1261px;top:359px;width:15px;height:576px;background:linear-gradient(90deg,#a8c3e8,#8fb0de 50%,#82a5d6);border:1px solid #6686b5"><div class="abs" style="left:4px;top:285px;width:5px;height:1px;background:#5676a6;box-shadow:0 2px 0 #5676a6,0 4px 0 #5676a6"></div></div>
  <div class="abs" style="left:1261px;top:934px;width:15px;height:16px;background:#fbfbfa;border:1px solid #8f8d89;border-radius:0 0 3px 3px"><svg class="abs" style="left:2px;top:4px" width="9" height="6" viewBox="0 0 9 6"><path d="M1 1L4.500 4.500L8 1" fill="none" stroke="#9a9894" stroke-width="1.500"/></svg></div>
  <div class="statusbar abs"></div>
  <span class="ui abs" style="left:123px;top:954px">Done</span>
  <svg class="abs" style="left:757px;top:956px" width="10" height="13" viewBox="0 0 12 15"><path d="M1 14 V5.500 C1 -0.500 11 -0.500 11 5.500 V14 L9 12 L7.500 14 L6 12 L4.500 14 L3 12Z" fill="#8b8d89" stroke="#4c4e4a"/><rect x="3" y="5" width="2" height="3" fill="#fff"/><rect x="7" y="5" width="2" height="3" fill="#fff"/></svg>
  <svg class="abs" style="left:788px;top:954px" width="17" height="17" viewBox="0 0 17 17"><circle cx="8.500" cy="8.500" r="7.500" fill="#1f9d1f" stroke="#0f6a0f"/><path d="M8.500 8.500 V1.500" stroke="#0b5a0b" stroke-width="1.200"/><path d="M4 5 A6 6 0 0 1 8 2.500" stroke="#6fdc6f" fill="none"/></svg>
<div class="abs" style="left:806px;top:953px;width:1px;height:21px;background:#b9b7b3;box-shadow:1px 0 0 #fbfbfa"></div>
  <svg class="abs" style="left:809px;top:954px" width="17" height="17" viewBox="0 0 17 17"><circle cx="8.500" cy="8.500" r="7.500" fill="#fff" stroke="#222" stroke-width="1.100"/><path d="M10.500 5.500L7 8.500L10.500 11.500" fill="none" stroke="#444" stroke-width="1"/></svg>
<div class="abs" style="left:828px;top:953px;width:1px;height:21px;background:#b9b7b3;box-shadow:1px 0 0 #fbfbfa"></div>
  <span class="abs" style="left:831px;top:952px;font-family:'DejaVu Serif','Liberation Serif',serif;font-size:17px;line-height:21px;color:#444">5</span>
<div class="abs" style="left:845px;top:953px;width:1px;height:21px;background:#b9b7b3;box-shadow:1px 0 0 #fbfbfa"></div>
  <span class="ui abs" style="left:854px;top:954px;letter-spacing:-.1px">Now: Cloudy, 85 °F</span>
<svg class="abs" style="left:986px;top:958px" width="24" height="13" viewBox="0 0 24 13"><path d="M3 12.500 C0 12.500 0 8.500 3 8 C3 5 6.500 4 8 6 C9 1.500 15 1 16.500 5 C19 4 21 6 20.500 8 C24 8.500 24 12.500 20.500 12.500Z" fill="url(#gCloud)" stroke="#a9aba7" stroke-width=".8"/></svg><div class="abs" style="left:1017px;top:953px;width:1px;height:21px;background:#b9b7b3;box-shadow:1px 0 0 #fbfbfa"></div>
  <span class="ui abs" style="left:1029px;top:954px;letter-spacing:-.15px">Tue: 93 °F</span>
<svg class="abs" style="left:1102px;top:952px" width="18" height="18" viewBox="0 0 18 18"><g stroke="#f2b319" stroke-width="2"><path d="M9 0V18M0 9H18M2.600 2.600L15.400 15.400M15.400 2.600L2.600 15.400M5.500 .8L12.500 17.200M12.500 .8L5.500 17.200M.8 5.500L17.200 12.500M.8 12.500L17.200 5.500"/></g><circle cx="9" cy="9" r="5.200" fill="#fbd238" stroke="#f0b010"/></svg><svg class="abs" style="left:1109px;top:960px" width="21" height="11" viewBox="0 0 24 13"><path d="M3 12.500 C0 12.500 0 8.500 3 8 C3 5 6.500 4 8 6 C9 1.500 15 1 16.500 5 C19 4 21 6 20.500 8 C24 8.500 24 12.500 20.500 12.500Z" fill="url(#gCloud)" stroke="#a9aba7" stroke-width=".8"/></svg><div class="abs" style="left:1134px;top:953px;width:1px;height:21px;background:#b9b7b3;box-shadow:1px 0 0 #fbfbfa"></div>
  <span class="ui abs" style="left:1143px;top:954px;letter-spacing:-.15px">Wed: 92 °F</span>
<svg class="abs" style="left:1222px;top:952px" width="18" height="18" viewBox="0 0 18 18"><g stroke="#f2b319" stroke-width="2"><path d="M9 0V18M0 9H18M2.600 2.600L15.400 15.400M15.400 2.600L2.600 15.400M5.500 .8L12.500 17.200M12.500 .8L5.500 17.200M.8 5.500L17.200 12.500M.8 12.500L17.200 5.500"/></g><circle cx="9" cy="9" r="5.200" fill="#fbd238" stroke="#f0b010"/></svg><svg class="abs" style="left:1229px;top:960px" width="21" height="11" viewBox="0 0 24 13"><path d="M3 12.500 C0 12.500 0 8.500 3 8 C3 5 6.500 4 8 6 C9 1.500 15 1 16.500 5 C19 4 21 6 20.500 8 C24 8.500 24 12.500 20.500 12.500Z" fill="url(#gCloud)" stroke="#a9aba7" stroke-width=".8"/></svg>
  <svg class="abs" style="left:1262px;top:962px" width="11" height="11" viewBox="0 0 11 11"><g fill="#b5b3af"><rect x="9" y="0" width="1.400" height="1.400"/><rect x="6" y="3" width="1.400" height="1.400"/><rect x="9" y="3" width="1.400" height="1.400"/><rect x="3" y="6" width="1.400" height="1.400"/><rect x="6" y="6" width="1.400" height="1.400"/><rect x="9" y="6" width="1.400" height="1.400"/><rect x="0" y="9" width="1.400" height="1.400"/><rect x="3" y="9" width="1.400" height="1.400"/><rect x="6" y="9" width="1.400" height="1.400"/><rect x="9" y="9" width="1.400" height="1.400"/></g></svg>
</div>

<svg class="abs" style="left:919px;top:758px" width="14" height="22" viewBox="0 0 14 22"><path d="M1 1 V17 L4.800 13.500 L7.500 20 L10 19 L7.300 12.500 H12.500Z" fill="#fff" stroke="#000" stroke-width="1.100" stroke-linejoin="round"/></svg>
<div id="botpanel" class="abs"></div>
<div class="abs" style="left:2px;top:1001px;width:21px;height:22px;border:1px solid #8f8d89;border-radius:4px;background:linear-gradient(#d9d7d3,#c4c2be)"><svg class="abs" style="left:1px;top:2px" width="17" height="16" viewBox="0 0 17 16"><rect x="2.500" y="2.500" width="12" height="11" fill="#f4f3ef" stroke="#6d6f6b"/><g fill="#3f6fb5"><path d="M0 0H5L0 5Z"/><path d="M17 0H12L17 5Z"/><path d="M0 16H5L0 11Z"/><path d="M17 16H12L17 11Z"/></g><path d="M6 10.500L11 5.500L12.500 7L7.500 12L5.500 12.500Z" fill="#f39a1d" stroke="#a15e08" stroke-width=".6"/></svg></div>
<svg class="abs" style="left:27px;top:1003px" width="5" height="18" viewBox="0 0 5 18"><g fill="#b4b2ad"><rect x="0" y="0" width="1.400" height="1.400"/><rect x="3" y="0" width="1.400" height="1.400"/><rect x="0" y="3" width="1.400" height="1.400"/><rect x="3" y="3" width="1.400" height="1.400"/><rect x="0" y="6" width="1.400" height="1.400"/><rect x="3" y="6" width="1.400" height="1.400"/><rect x="0" y="9" width="1.400" height="1.400"/><rect x="3" y="9" width="1.400" height="1.400"/><rect x="0" y="12" width="1.400" height="1.400"/><rect x="3" y="12" width="1.400" height="1.400"/><rect x="0" y="15" width="1.400" height="1.400"/><rect x="3" y="15" width="1.400" height="1.400"/></g></svg>
<div class="tb abs" style="left:36px"></div><svg class="abs" style="left:42px;top:1004px;opacity:1" width="17" height="16" viewBox="0 0 21 19"><rect x="0.500" y="0.500" width="20" height="18" rx="2.500" fill="#7a7c78" stroke="#2e3436"/><rect x="2.500" y="2.500" width="16" height="12" fill="#23272a"/><path d="M5 5 L8 7.500 L5 10" stroke="#fff" stroke-width="1.500" fill="none"/><path d="M9 11 H13" stroke="#fff" stroke-width="1.500"/><rect x="3" y="15.500" width="3" height="1.500" fill="#7bd03a"/></svg><span class="ui tbt abs" style="left:66px">root...</span>
<div class="tb abs" style="left:124px"></div><svg class="abs" style="left:132px;top:1004px;opacity:.45" width="14" height="17" viewBox="0 0 14 17"><rect x="0.500" y="0.500" width="13" height="16" fill="#fdfdfc" stroke="#b5b3af"/><path d="M3 4H11M3 6.500H11" stroke="#d5d3cf"/></svg><span class="ui tbt abs" style="left:154px">[Cov...</span>
<div class="tb abs" style="left:213px"></div><svg class="abs" style="left:219px;top:1004px;opacity:1" width="17" height="16" viewBox="0 0 21 19"><rect x="0.500" y="0.500" width="20" height="18" rx="2.500" fill="#7a7c78" stroke="#2e3436"/><rect x="2.500" y="2.500" width="16" height="12" fill="#23272a"/><path d="M5 5 L8 7.500 L5 10" stroke="#fff" stroke-width="1.500" fill="none"/><path d="M9 11 H13" stroke="#fff" stroke-width="1.500"/><rect x="3" y="15.500" width="3" height="1.500" fill="#7bd03a"/></svg><span class="ui tbt abs" style="left:243px">root...</span>
<div class="tb abs" style="left:302px"></div><svg class="abs" style="left:308px;top:1004px;opacity:0.35" width="17" height="16" viewBox="0 0 21 19"><rect x="0.500" y="0.500" width="20" height="18" rx="2.500" fill="#7a7c78" stroke="#2e3436"/><rect x="2.500" y="2.500" width="16" height="12" fill="#23272a"/><path d="M5 5 L8 7.500 L5 10" stroke="#fff" stroke-width="1.500" fill="none"/><path d="M9 11 H13" stroke="#fff" stroke-width="1.500"/><rect x="3" y="15.500" width="3" height="1.500" fill="#7bd03a"/></svg><span class="ui tbt abs" style="left:332px">[walt...</span>
<div class="tb abs" style="left:391px"></div><svg class="abs" style="left:397px;top:1004px;opacity:0.35" width="17" height="16" viewBox="0 0 21 19"><rect x="0.500" y="0.500" width="20" height="18" rx="2.500" fill="#7a7c78" stroke="#2e3436"/><rect x="2.500" y="2.500" width="16" height="12" fill="#23272a"/><path d="M5 5 L8 7.500 L5 10" stroke="#fff" stroke-width="1.500" fill="none"/><path d="M9 11 H13" stroke="#fff" stroke-width="1.500"/><rect x="3" y="15.500" width="3" height="1.500" fill="#7bd03a"/></svg><span class="ui tbt abs" style="left:421px">[root...</span>
<div class="tb abs" style="left:480px"></div><svg class="abs" style="left:486px;top:1004px;opacity:1" width="17" height="16" viewBox="0 0 21 19"><rect x="0.500" y="0.500" width="20" height="18" rx="2.500" fill="#7a7c78" stroke="#2e3436"/><rect x="2.500" y="2.500" width="16" height="12" fill="#23272a"/><path d="M5 5 L8 7.500 L5 10" stroke="#fff" stroke-width="1.500" fill="none"/><path d="M9 11 H13" stroke="#fff" stroke-width="1.500"/><rect x="3" y="15.500" width="3" height="1.500" fill="#7bd03a"/></svg><span class="ui tbt abs" style="left:510px">root...</span>
<div class="tb abs" style="left:569px"></div><svg class="abs" style="left:576px;top:1006px" width="14" height="12" viewBox="0 0 16 14"><rect x="0.500" y="0.500" width="15" height="13" fill="#f4f4f3" stroke="#6f737b"/><rect x="0.500" y="0.500" width="15" height="3" fill="#3e64a8" stroke="#2d4f8e"/></svg><span class="ui tbt abs" style="left:599px">GtkT...</span>
<div class="tb abs" style="left:658px"></div><svg class="abs" style="left:664px;top:1004px;opacity:1" width="17" height="16" viewBox="0 0 21 19"><rect x="0.500" y="0.500" width="20" height="18" rx="2.500" fill="#7a7c78" stroke="#2e3436"/><rect x="2.500" y="2.500" width="16" height="12" fill="#23272a"/><path d="M5 5 L8 7.500 L5 10" stroke="#fff" stroke-width="1.500" fill="none"/><path d="M9 11 H13" stroke="#fff" stroke-width="1.500"/><rect x="3" y="15.500" width="3" height="1.500" fill="#7bd03a"/></svg><span class="ui tbt abs" style="left:688px">walte...</span>
<div class="tb act abs" style="left:747px"></div><svg class="abs" style="left:753px;top:1003px" width="18" height="18"><use href="#ffx"/></svg><span class="ui tbt abs" style="left:777px">SunS...</span>
<div class="tb abs" style="left:836px"></div><svg class="abs" style="left:842px;top:1003px" width="17" height="18" viewBox="0 0 17 18"><rect x="0.500" y="1.500" width="5" height="15" fill="#3465a4" stroke="#204a87"/><rect x="3.500" y="0.500" width="13" height="17" rx="1.500" fill="#fff" stroke="#888a85"/><text x="5" y="7" font-family="Liberation Sans,sans-serif" font-size="6.500" font-weight="bold" fill="#c00">A</text><path d="M10 9.500 C8.500 7.500 6 9.500 10 13.500 C14 9.500 11.500 7.500 10 9.500Z" fill="#d40000"/></svg><span class="ui tbt abs" style="left:866px">Yukon</span>
<div class="tb abs" style="left:925px"></div><svg class="abs" style="left:930px;top:1003px" width="19" height="18" viewBox="0 0 24 22"><rect x="1.500" y="2.500" width="15" height="18" fill="#fbfbf8" stroke="#8a8a86"/><g stroke="#b5b5b0"><path d="M4 7H14M4 10H14M4 13H14M4 16H11"/></g><path d="M3 2v2M6 2v2M9 2v2M12 2v2M15 2v2" stroke="#444"/><path d="M12 15 L21 5 L23 7 L14 17 L11.500 17.500Z" fill="#f39a1d" stroke="#a15e08" stroke-width=".8"/></svg><span class="ui tbt abs" style="left:955px">*Uns...</span>
<div class="tb abs" style="left:1014px"></div><svg class="abs" style="left:1021px;top:1006px" width="14" height="12" viewBox="0 0 16 14"><rect x="0.500" y="0.500" width="15" height="13" fill="#f4f4f3" stroke="#6f737b"/><rect x="0.500" y="0.500" width="15" height="3" fill="#3e64a8" stroke="#2d4f8e"/></svg><span class="ui tbt abs" style="left:1044px">GtkT...</span>
<svg class="abs" style="left:1104px;top:1001px" width="21" height="22" viewBox="0 0 21 22"><path d="M3 4 L6 1.500 L9 3 L12 0.800 L15 2.500 L18 1.500 L19 6 H2Z" fill="#f4f4f4" stroke="#b9b9b9" stroke-width=".6"/><path d="M1.500 6 Q1.500 5 2.500 5 H15 L19.500 8 V19 Q19.500 21 17.500 21 H3.500 Q1.500 21 1.500 19Z" fill="#4278c4" stroke="#2a559c"/><path d="M15 5 L15.500 9 L19.500 8" fill="#dfe8f5" stroke="#9fb4d6" stroke-width=".5"/></svg>
<div class="abs" style="left:1178px;top:1001px;width:101px;height:22px;background:#aaa6a1;border-radius:3px;border:1px solid #8d8a85"></div><div class="abs" style="left:1179px;top:1002px;width:24px;height:20px;background:#c5d8f1;border-bottom:2px solid #4a77b8"></div><div class="abs" style="left:1203px;top:1002px;width:1px;height:20px;background:#c8c5c0"></div><div class="abs" style="left:1228px;top:1002px;width:1px;height:20px;background:#c8c5c0"></div><div class="abs" style="left:1253px;top:1002px;width:1px;height:20px;background:#c8c5c0"></div><svg class="abs" style="left:1183px;top:1003px" width="16" height="16"><use href="#ffx"/></svg>
</body>
</html>
